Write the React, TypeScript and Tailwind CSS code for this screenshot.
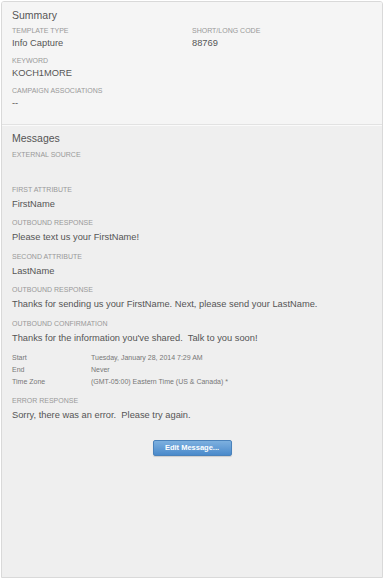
import React from 'react';

const Label: React.FC<{ children: React.ReactNode; className?: string }> = ({ children, className = '' }) => (
    <div className={`text-[7px] leading-[10px] uppercase text-[#999] ${className}`}>{children}</div>
);

const Value: React.FC<{ children?: React.ReactNode; className?: string }> = ({ children, className = '' }) => (
    <div className={`text-[9.3px] text-[#555] ${className}`}>{children}</div>
);

const schedule = [
    { label: 'Start', value: 'Tuesday, January 28, 2014 7:29 AM' },
    { label: 'End', value: 'Never' },
    { label: 'Time Zone', value: '(GMT-05:00) Eastern Time (US & Canada) *' },
];

const App: React.FC = () => {
    return (
        <div className="p-px bg-white antialiased" style={{ fontFamily: '"Liberation Sans", Arial, sans-serif' }}>
            <div className="h-[577px] flex flex-col border border-[#d9d9d9] rounded-t-[3px] overflow-hidden">
                {/* Summary */}
                <div className="bg-[#f5f5f5] pt-[5.5px] pb-[14px] pl-[10px] pr-[10px]">
                    <h2 className="text-[10.5px] leading-[14px] text-[#555]">Summary</h2>
                    <div className="grid grid-cols-2 mt-[4.5px]">
                        <div>
                            <Label>Template Type</Label>
                            <Value className="leading-[13px] mt-px">Info Capture</Value>
                        </div>
                        <div>
                            <Label>Short/Long Code</Label>
                            <Value className="leading-[13px] mt-px">88769</Value>
                        </div>
                    </div>
                    <Label className="mt-[6px]">Keyword</Label>
                    <Value className="leading-[13px] mt-px">KOCH1MORE</Value>
                    <Label className="mt-[6px]">Campaign Associations</Label>
                    <Value className="leading-[13px] mt-px">--</Value>
                </div>

                {/* Messages */}
                <div className="flex-1 bg-[#efefef] border-t border-[#e2e2e2] shadow-[inset_0_1px_0_#fafafa] pt-[6px] pl-[10px] pr-[10px]">
                    <h2 className="text-[10.5px] leading-[14px] text-[#555]">Messages</h2>
                    <Label className="mt-[5px]">External Source</Label>
                    <Value className="h-[14px] mt-[2px] mb-[8.5px]" />

                    <Label>First Attribute</Label>
                    <Value className="leading-[14px] mt-[2px] mb-[7.6px]">FirstName</Value>
                    <Label>Outbound Response</Label>
                    <Value className="leading-[14px] mt-[2px] mb-[7.6px]">Please text us your FirstName!</Value>
                    <Label>Second Attribute</Label>
                    <Value className="leading-[14px] mt-[2px] mb-[7.6px]">LastName</Value>
                    <Label>Outbound Response</Label>
                    <Value className="leading-[14px] mt-[2px] mb-[7.6px]">
                        Thanks for sending us your FirstName. Next, please send your LastName.
                    </Value>
                    <Label>Outbound Confirmation</Label>
                    <Value className="leading-[14px] mt-[2px] whitespace-pre">
                        {"Thanks for the information you've shared.  Talk to you soon!"}
                    </Value>

                    <div className="mt-[7.5px]">
                        {schedule.map((row) => (
                            <div key={row.label} className="flex text-[7px] leading-[12px] text-[#777]">
                                <span className="w-[79px]">{row.label}</span>
                                <span>{row.value}</span>
                            </div>
                        ))}
                    </div>

                    <Label className="mt-[7.5px]">Error Response</Label>
                    <Value className="leading-[14px] mt-[2px] whitespace-pre">
                        {'Sorry, there was an error.  Please try again.'}
                    </Value>

                    <div className="flex justify-center mt-[18px]">
                        <button className="w-[79px] h-[16px] rounded-[2px] border border-[#4a82bb] bg-gradient-to-b from-[#7db0df] to-[#4a8acb] text-white text-[7.5px] font-bold leading-none shadow-[0_1px_1px_rgba(0,0,0,0.15)]">
                            Edit Message...
                        </button>
                    </div>
                </div>
            </div>
        </div>
    );
};

export default App;
